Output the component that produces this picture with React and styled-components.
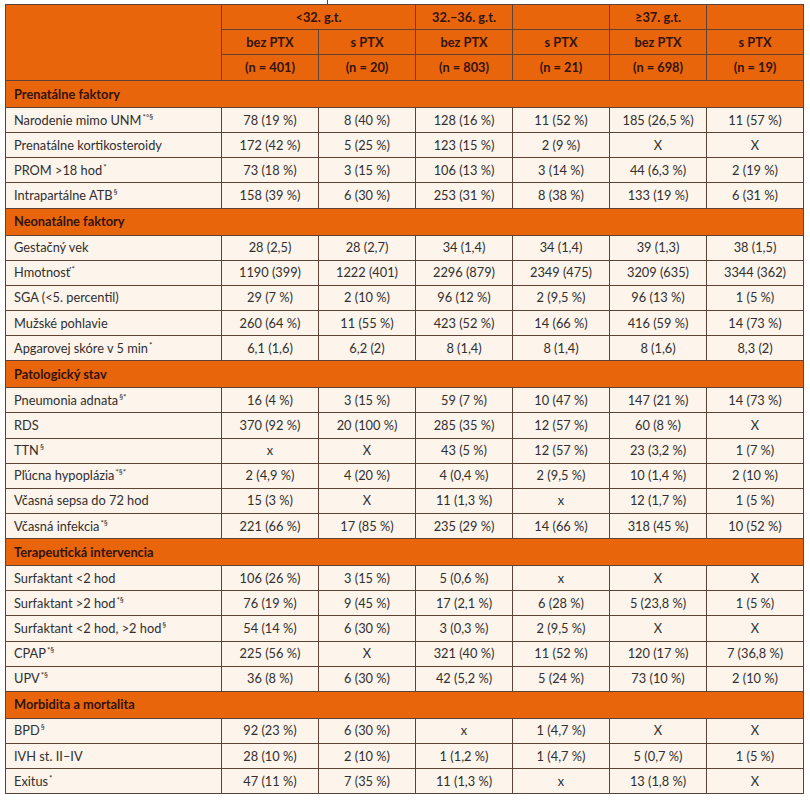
import React from "react";
import styled, { createGlobalStyle } from "styled-components";

const Global = createGlobalStyle`
  html, body { margin: 0; padding: 0; background: #ffffff; }
  body { font-family: Lato, "Open Sans", sans-serif; }
`;

const ORANGE = "#e8650c";
const CREAM = "#fdf4ec";
const LINE = "#5e4334";

const Page = styled.div`
  position: relative;
  padding: 4px 7px 6px 5px;
  width: 798px;
`;

const Tick = styled.span`
  position: absolute;
  left: 327px;
  top: 0;
  width: 1px;
  height: 4px;
  background: ${LINE};
`;

const Table = styled.table`
  width: 798px;
  border-collapse: collapse;
  table-layout: fixed;
  border: 1px solid ${LINE};
  font-size: 12.8px;
  line-height: 15px;
`;

const HeadCell = styled.th`
  box-sizing: border-box;
  background: ${ORANGE};
  color: #33130a;
  font-weight: 700;
  text-align: center;
  border: 1px solid ${LINE};
  padding: 0;
  height: ${(p) => p.$h || 25}px;
`;

const SectionCell = styled.td`
  box-sizing: border-box;
  background: ${ORANGE};
  color: #33130a;
  font-weight: 700;
  text-align: left;
  padding: 0 0 0 8px;
  border: 1px solid ${LINE};
  height: 27px;
`;

const LabelCell = styled.td`
  box-sizing: border-box;
  background: ${CREAM};
  color: #2f2f2f;
  text-align: left;
  padding: 0 0 0 8px;
  border: 1px solid ${LINE};
  height: 25.15px;
  white-space: nowrap;
`;

const ValueCell = styled.td`
  box-sizing: border-box;
  background: ${CREAM};
  color: #2f2f2f;
  text-align: center;
  padding: 0;
  border: 1px solid ${LINE};
  white-space: nowrap;
`;

const Sup = styled.sup`
  font-size: 8px;
  vertical-align: 5px;
  line-height: 0;
  margin-left: 1px;
`;

const sections = [
  {
    title: "Prenatálne faktory",
    rows: [
      ["Narodenie mimo UNM", "*°§", "78 (19 %)", "8 (40 %)", "128 (16 %)", "11 (52 %)", "185 (26,5 %)", "11 (57 %)"],
      ["Prenatálne kortikosteroidy", "", "172 (42 %)", "5 (25 %)", "123 (15 %)", "2 (9 %)", "X", "X"],
      ["PROM >18 hod", "*", "73 (18 %)", "3 (15 %)", "106 (13 %)", "3 (14 %)", "44 (6,3 %)", "2 (19 %)"],
      ["Intrapartálne ATB", "§", "158 (39 %)", "6 (30 %)", "253 (31 %)", "8 (38 %)", "133 (19 %)", "6 (31 %)"],
    ],
  },
  {
    title: "Neonatálne faktory",
    rows: [
      ["Gestačný vek", "", "28 (2,5)", "28 (2,7)", "34 (1,4)", "34 (1,4)", "39 (1,3)", "38 (1,5)"],
      ["Hmotnosť", "*", "1190 (399)", "1222 (401)", "2296 (879)", "2349 (475)", "3209 (635)", "3344 (362)"],
      ["SGA (<5. percentil)", "", "29 (7 %)", "2 (10 %)", "96 (12 %)", "2 (9,5 %)", "96 (13 %)", "1 (5 %)"],
      ["Mužské pohlavie", "", "260 (64 %)", "11 (55 %)", "423 (52 %)", "14 (66 %)", "416 (59 %)", "14 (73 %)"],
      ["Apgarovej skóre v 5 min", "*", "6,1 (1,6)", "6,2 (2)", "8 (1,4)", "8 (1,4)", "8 (1,6)", "8,3 (2)"],
    ],
  },
  {
    title: "Patologický stav",
    rows: [
      ["Pneumonia adnata", "§*", "16 (4 %)", "3 (15 %)", "59 (7 %)", "10 (47 %)", "147 (21 %)", "14 (73 %)"],
      ["RDS", "", "370 (92 %)", "20 (100 %)", "285 (35 %)", "12 (57 %)", "60 (8 %)", "X"],
      ["TTN", "§", "x", "X", "43 (5 %)", "12 (57 %)", "23 (3,2 %)", "1 (7 %)"],
      ["Pľúcna hypoplázia", "*§*", "2 (4,9 %)", "4 (20 %)", "4 (0,4 %)", "2 (9,5 %)", "10 (1,4 %)", "2 (10 %)"],
      ["Včasná sepsa do 72 hod", "", "15 (3 %)", "X", "11 (1,3 %)", "x", "12 (1,7 %)", "1 (5 %)"],
      ["Včasná infekcia", "*§", "221 (66 %)", "17 (85 %)", "235 (29 %)", "14 (66 %)", "318 (45 %)", "10 (52 %)"],
    ],
  },
  {
    title: "Terapeutická intervencia",
    rows: [
      ["Surfaktant <2 hod", "", "106 (26 %)", "3 (15 %)", "5 (0,6 %)", "x", "X", "X"],
      ["Surfaktant >2 hod", "*§", "76 (19 %)", "9 (45 %)", "17 (2,1 %)", "6 (28 %)", "5 (23,8 %)", "1 (5 %)"],
      ["Surfaktant <2 hod, >2 hod", "§", "54 (14 %)", "6 (30 %)", "3 (0,3 %)", "2 (9,5 %)", "X", "X"],
      ["CPAP", "*§", "225 (56 %)", "X", "321 (40 %)", "11 (52 %)", "120 (17 %)", "7 (36,8 %)"],
      ["UPV", "*§", "36 (8 %)", "6 (30 %)", "42 (5,2 %)", "5 (24 %)", "73 (10 %)", "2 (10 %)"],
    ],
  },
  {
    title: "Morbidita a mortalita",
    rows: [
      ["BPD", "§", "92 (23 %)", "6 (30 %)", "x", "1 (4,7 %)", "X", "X"],
      ["IVH st. II–IV", "", "28 (10 %)", "2 (10 %)", "1 (1,2 %)", "1 (4,7 %)", "5 (0,7 %)", "1 (5 %)"],
      ["Exitus", "*", "47 (11 %)", "7 (35 %)", "11 (1,3 %)", "x", "13 (1,8 %)", "X"],
    ],
  },
];

export default function App() {
  return (
    <>
      <Global />
      <Page>
        <Tick />
        <Table>
          <colgroup>
            <col style={{ width: 216 }} />
            <col style={{ width: 97 }} />
            <col style={{ width: 97 }} />
            <col style={{ width: 97 }} />
            <col style={{ width: 97 }} />
            <col style={{ width: 97 }} />
            <col style={{ width: 97 }} />
          </colgroup>
          <thead>
            <tr>
              <HeadCell rowSpan={3} />
              <HeadCell colSpan={2}>&lt;32. g.t.</HeadCell>
              <HeadCell>32.–36. g.t.</HeadCell>
              <HeadCell />
              <HeadCell>≥37. g.t.</HeadCell>
              <HeadCell />
            </tr>
            <tr>
              <HeadCell>bez PTX</HeadCell>
              <HeadCell>s PTX</HeadCell>
              <HeadCell>bez PTX</HeadCell>
              <HeadCell>s PTX</HeadCell>
              <HeadCell>bez PTX</HeadCell>
              <HeadCell>s PTX</HeadCell>
            </tr>
            <tr>
              <HeadCell $h={26}>(n = 401)</HeadCell>
              <HeadCell $h={26}>(n = 20)</HeadCell>
              <HeadCell $h={26}>(n = 803)</HeadCell>
              <HeadCell $h={26}>(n = 21)</HeadCell>
              <HeadCell $h={26}>(n = 698)</HeadCell>
              <HeadCell $h={26}>(n = 19)</HeadCell>
            </tr>
          </thead>
          <tbody>
            {sections.map((s) => (
              <React.Fragment key={s.title}>
                <tr>
                  <SectionCell colSpan={7}>{s.title}</SectionCell>
                </tr>
                {s.rows.map(([label, sup, ...vals]) => (
                  <tr key={label}>
                    <LabelCell>
                      {label}
                      {sup && <Sup>{sup}</Sup>}
                    </LabelCell>
                    {vals.map((v, i) => (
                      <ValueCell key={i}>{v}</ValueCell>
                    ))}
                  </tr>
                ))}
              </React.Fragment>
            ))}
          </tbody>
        </Table>
      </Page>
    </>
  );
}
